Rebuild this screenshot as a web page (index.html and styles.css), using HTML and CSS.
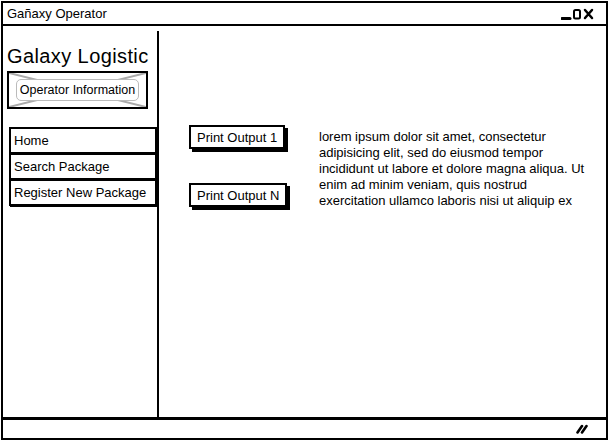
FILE: index.html
```html
<!DOCTYPE html>
<html lang="en">
<head>
    <meta charset="UTF-8">
    <meta name="viewport" content="width=device-width, initial-scale=1.0">
    <title>Gañaxy Operator</title>
    <link rel="stylesheet" href="styles.css">
</head>
<body>
    <div class="window">
        <div class="titlebar">
            <span class="title">Gañaxy Operator</span>
            <span class="controls">
                <svg width="34" height="12" viewBox="0 0 34 12">
                    <path d="M1 10.5 H9" stroke="#000" stroke-width="3" stroke-linecap="round"/>
                    <rect x="13" y="2" width="6" height="8.5" rx="1.5" fill="none" stroke="#000" stroke-width="2"/>
                    <path d="M24 2 L31 10 M31 2 L24 10" stroke="#000" stroke-width="2.5" stroke-linecap="round"/>
                </svg>
            </span>
        </div>

        <div class="content">
            <!-- menu lateral -->
            <div class="sidebar">
                <div class="brand">Galaxy Logistic</div>
                <div class="operator">
                    <svg class="cross" width="136" height="34" viewBox="0 0 136 34" preserveAspectRatio="none">
                        <path d="M0 0 L136 34 M136 0 L0 34" stroke="#aaa" stroke-width="2"/>
                    </svg>
                    <span class="operator-label">Operator Information</span>
                </div>
                <div class="nav">
                    <div class="nav-item">Home</div>
                    <div class="nav-item">Search Package</div>
                    <div class="nav-item">Register New Package</div>
                </div>
            </div>

            <!-- area principal -->
            <div class="main">
                <div class="actions">
                    <button class="btn">Print Output 1</button>
                    <button class="btn">Print Output N</button>
                </div>
                <p class="lorem">lorem ipsum dolor sit amet, consectetur adipisicing elit, sed do eiusmod tempor incididunt ut labore et dolore magna aliqua. Ut enim ad minim veniam, quis nostrud exercitation ullamco laboris nisi ut aliquip ex</p>
            </div>
        </div>

        <div class="statusbar">
            <svg class="grip" width="12" height="10" viewBox="0 0 12 10">
                <path d="M1.5 8.5 L6 2 M6 8.5 L10.5 2" stroke="#000" stroke-width="2.6" stroke-linecap="round"/>
            </svg>
        </div>
    </div>
</body>
</html>
```

FILE: styles.css
```css
* {
    box-sizing: border-box;
}

body {
    margin: 0;
    background: #fff;
    font-family: "Liberation Sans", Arial, sans-serif;
    color: #000;
}

.window {
    width: 607px;
    height: 439px;
    margin: 1px 0 0 1px;
    border: 2px solid #000;
    display: flex;
    flex-direction: column;
}

.titlebar {
    height: 23px;
    border-bottom: 2px solid #000;
    display: flex;
    align-items: center;
    justify-content: space-between;
    padding: 0 11px 0 4px;
    font-size: 13px;
}

.controls svg {
    display: block;
}

.content {
    flex: 1;
    display: flex;
    padding-top: 5px;
}

.sidebar {
    width: 156px;
    border-right: 2px solid #000;
    padding: 13px 0 0 4px;
}

.brand {
    font-size: 20px;
    letter-spacing: 0.4px;
    line-height: 24px;
}

.operator {
    position: relative;
    width: 141px;
    height: 38px;
    margin-top: 3px;
    border: 2px solid #000;
    display: flex;
    align-items: center;
    justify-content: center;
}

.cross {
    position: absolute;
    left: 0;
    top: 0;
    width: 100%;
    height: 100%;
}

.operator-label {
    position: relative;
    background: #fff;
    border: 1px solid #bbb;
    border-radius: 5px;
    padding: 3px 3px;
    font-size: 12.5px;
}

.nav {
    margin-top: 19px;
    margin-left: 2px;
    width: 148px;
    display: flex;
    flex-direction: column;
}

.nav-item {
    height: 27px;
    border: 2px solid #000;
    margin-top: -1px;
    padding-left: 3px;
    font-size: 13px;
    line-height: 23px;
    box-shadow: 1px 1px 0 #000;
}

.main {
    flex: 1;
    display: flex;
    padding: 94px 0 0 30px;
}

.actions {
    width: 130px;
    display: flex;
    flex-direction: column;
    align-items: flex-start;
    gap: 34px;
}

.btn {
    font-family: inherit;
    font-size: 13px;
    color: #000;
    background: #fff;
    border: 2px solid #000;
    border-radius: 0;
    height: 24px;
    padding: 0 6px;
    box-shadow: 3px 3px 0 #000;
}

.lorem {
    margin: 4px 0 0 0;
    width: 272px;
    font-size: 13px;
    line-height: 16px;
}

.statusbar {
    height: 21px;
    border-top: 3px solid #000;
    display: flex;
    align-items: center;
    justify-content: flex-end;
    padding-right: 18px;
}
```
